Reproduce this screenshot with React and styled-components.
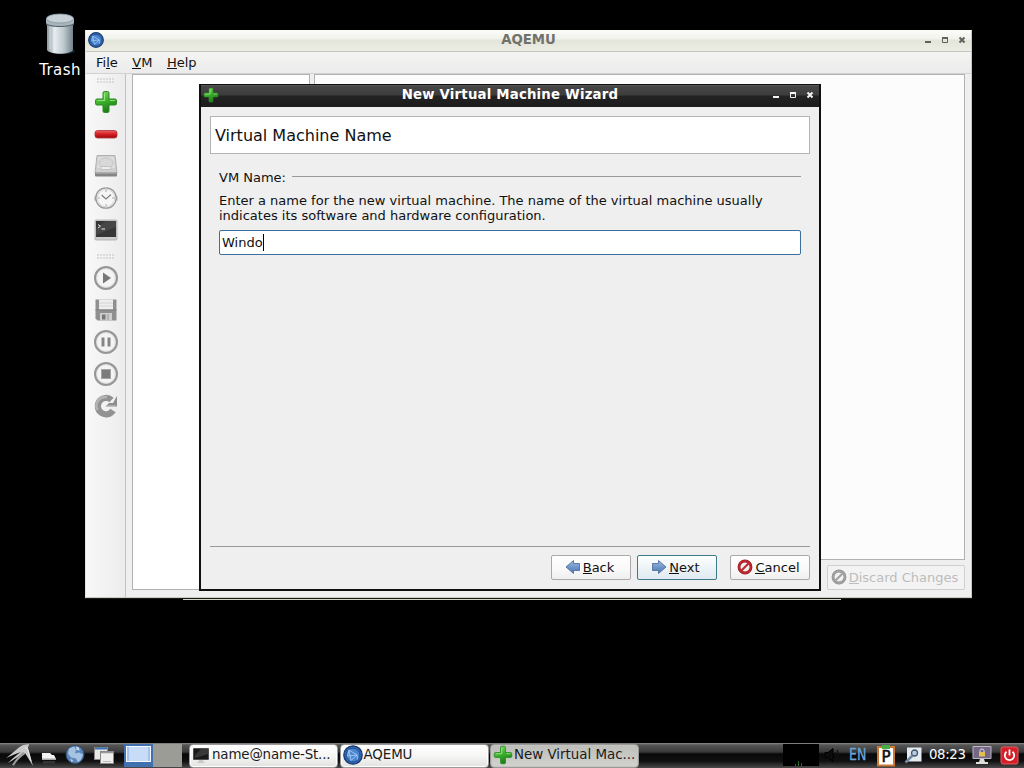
import styled, { createGlobalStyle, css } from 'styled-components'

const GlobalStyle = createGlobalStyle`
  *, *::before, *::after { box-sizing: border-box; }
  body {
    margin: 0;
    background: #000;
    overflow: hidden;
    font-family: 'DejaVu Sans', sans-serif;
    font-size: 13px;
    color: #111;
  }
  svg { display: block; flex: none; }
  u {
    text-decoration: none;
    background: linear-gradient(currentColor, currentColor) 0 calc(100% - 1px) / 100% 1px no-repeat;
  }
`

const Desktop = styled.div`
  position: relative;
  width: 1024px;
  height: 768px;
  background: #000;
  overflow: hidden;
`

const DesktopIcon = styled.div`
  position: absolute;
  left: 30px;
  top: 13px;
  width: 60px;
  display: flex;
  flex-direction: column;
  align-items: center;
  color: #fff;
  font-size: 15px;
  letter-spacing: 0.4px;
  line-height: 20px;
  gap: 3px;
`

const HiddenWindowEdge = styled.div`
  position: absolute;
  left: 183px;
  top: 597px;
  width: 658px;
  height: 3px;
  background: #d4d5c9;
`

const MainWindow = styled.section`
  position: absolute;
  left: 85px;
  top: 30px;
  width: 887px;
  height: 568px;
  display: flex;
  flex-direction: column;
  background: #efefef;
  border: 1px solid #c9cabf;
  border-top-color: #fafaf5;
  border-left-color: #e4e4df;
  box-shadow: 0 1px 0 #1a1a18;
`

const TitleBar = styled.header`
  height: ${p => (p.$active ? 22 : 21)}px;
  flex: none;
  display: grid;
  grid-template-columns: 60px 1fr 60px;
  align-items: center;
  padding-bottom: 2px;
  font-weight: bold;
  font-size: 13.3px;
  ${p => p.$active
    ? css`
        color: #fff;
        letter-spacing: 0.19px;
        background: linear-gradient(#606060 0, #474747 1px, #3d3d3d 10px, #232323 11px, #1c1c1c 100%);
      `
    : css`
        color: #72726c;
        background: linear-gradient(#fbfbf8 0, #f2f2ec 8px, #e4e5d9 9px, #ecede4 100%);
        border-bottom: 1px solid #c6c6bf;
      `}
`

const TitleText = styled.h1`
  margin: 0;
  font-size: inherit;
  line-height: 18px;
  text-align: center;
`

const TitleIcon = styled.span`
  padding-left: 2px;
`

const WindowControls = styled.span`
  display: flex;
  justify-content: flex-end;
  padding-right: 4px;
`

const MenuBar = styled.nav`
  height: 22px;
  flex: none;
  display: flex;
  align-items: center;
  gap: 14.500px;
  padding-left: 10px;
  font-size: 13px;
  background: linear-gradient(#f4f4f3, #ebebeb);
  border-bottom: 1px solid #d2d2d2;
`

const WindowBody = styled.div`
  flex: 1;
  display: flex;
  min-height: 0;
`

const ToolBar = styled.div`
  width: 40px;
  flex: none;
  display: flex;
  flex-direction: column;
  align-items: center;
  background: linear-gradient(90deg, #f8f8f8, #f1f1f1 60%, #ececec);
  border-right: 1px solid #c2c2c2;
`

const ToolButton = styled.span`
  width: 32px;
  height: 32px;
  display: flex;
  align-items: center;
  justify-content: center;
`

const Grip = styled.span`
  width: 17px;
  height: 5px;
  margin: ${p => p.$margin};
  background: radial-gradient(circle at 1px 1px, #d2d2d2 0.6px, transparent 1px) 0 0 / 3px 3px;
`

const Panels = styled.div`
  flex: 1;
  display: flex;
  gap: 4px;
  padding: 0 6px 7px;
`

const VmList = styled.div`
  width: 178px;
  background: #fff;
  border: 1px solid #b1b1b1;
`

const VmDetails = styled.div`
  flex: 1;
  display: flex;
  flex-direction: column;
  align-items: flex-end;
  gap: 5px;
`

const DetailsPane = styled.div`
  flex: 1;
  width: 100%;
  background: #fcfcfc;
  border: 1px solid #b1b1b1;
`

const PushButton = styled.button`
  display: flex;
  align-items: center;
  justify-content: center;
  flex: none;
  width: ${p => p.$width || 80}px;
  height: 25px;
  margin: 0 0 0 ${p => p.$gap || 0}px;
  padding: 0 3px 1px 0;
  gap: 2px;
  font: inherit;
  font-size: 13px;
  color: #111;
  border: 1px solid #aaa;
  border-radius: 2px;
  background: linear-gradient(#fff, #f9f9f9 55%, #efefef);
  ${p => p.$default && css`
    border-color: #3c7a89;
    background: linear-gradient(#fdffff, #edf4f9 50%, #e0eaf0);
  `}
  &:disabled {
    color: #bdbdbd;
    border-color: #cfcfcf;
    background: #f3f3f3;
  }
`

const Dialog = styled.section`
  position: absolute;
  left: 199px;
  top: 84px;
  width: 622px;
  height: 507px;
  display: flex;
  flex-direction: column;
  background: #efefef;
  border: 2px solid #101010;
  border-top-width: 1px;
`

const DialogBody = styled.div`
  flex: 1;
  display: flex;
  flex-direction: column;
  padding: 9px;
`

const PageTitle = styled.h2`
  margin: 0;
  height: 38px;
  flex: none;
  padding-left: 4px;
  font-size: 16px;
  font-weight: normal;
  line-height: 38px;
  background: #fff;
  border: 1px solid #b4b4b4;
`

const Group = styled.div`
  flex: 1;
  padding: 16px 9px 0;
`

const GroupTitle = styled.div`
  display: flex;
  align-items: center;
  gap: 6px;
  line-height: 16px;

  &::after {
    content: '';
    flex: 1;
    height: 1px;
    margin-bottom: 3px;
    background: #999;
  }
`

const Hint = styled.p`
  margin: 7px 0;
  line-height: 15px;
  white-space: nowrap;
`

const NameField = styled.div`
  height: 25px;
  display: flex;
  align-items: center;
  padding-left: 2px;
  background: #fff;
  border: 1px solid #3c6f9c;
  border-radius: 2px;
`

const Caret = styled.span`
  width: 1px;
  height: 17px;
  background: #000;
`

const DialogFooter = styled.footer`
  display: flex;
  justify-content: flex-end;
  border-top: 1px solid #999;
  padding-top: 8px;
`

const Panel = styled.footer`
  position: absolute;
  left: 0;
  right: 0;
  bottom: 0;
  height: 25px;
  display: flex;
  align-items: center;
  background: linear-gradient(#8a8a8a 0, #555 2px, #393939 9px, #080808 11px, #101010 18px, #4a4a4a 100%);
`

const Launchers = styled.div`
  display: flex;
  align-items: center;
  width: 124px;
  padding: 0 0 2px 5px;
  gap: 8px;
`

const Pager = styled.div`
  display: flex;
  width: 65px;
  height: 23px;
`

const PagerDesk = styled.span`
  width: 29px;
  height: 23px;
  padding: 2px 2px 3px;
  background: ${p => (p.$current ? '#4170b0' : '#9c9c96')};
`

const PagerWindow = styled.span`
  display: block;
  height: 16px;
  background: #c9dcf7;
  border: 1px solid #f5f9ff;
  box-shadow: inset 3px 0 0 -1px #a5c3ea, inset -3px 0 0 -1px #a5c3ea;
`

const TaskList = styled.div`
  display: flex;
  gap: 1.500px;
  flex: 1;
`

const TaskButton = styled.span`
  width: 149px;
  height: 24px;
  display: flex;
  align-items: center;
  gap: ${p => p.$gap || 1}px;
  padding: 0 2px 2px;
  font-size: 13.4px;
  letter-spacing: ${p => p.$spacing || 0}px;
  white-space: nowrap;
  color: #1a1a1a;
  border: 1px solid #999;
  border-radius: 4px;
  box-shadow: inset 0 0 0 1px ${p => (p.$active ? '#c4c4c0' : '#fff')};
  background: ${p => (p.$active ? 'linear-gradient(#bdbdb9, #d2d2ce)' : 'linear-gradient(#fff, #f6f6f5 50%, #e2e2e0)')};
`

const Tray = styled.div`
  display: flex;
  align-items: center;
  width: 241px;
  padding-bottom: 1px;
  color: #fff;
`

const CpuGraph = styled.span`
  width: 36px;
  height: 22px;
  display: flex;
  align-items: flex-end;
  padding-left: 11px;
  background: #000;
`

const KeyboardLayout = styled.span`
  width: 19px;
  margin: 0 8px 0 10px;
  color: #6aa5da;
  font-size: 15px;
  line-height: 20px;
  transform: scaleX(0.84);
  transform-origin: left;
  -webkit-text-stroke: 0.3px #6aa5da;
`

const Clock = styled.time`
  width: 37px;
  margin: 0 6px 0 7px;
  font-size: 13.3px;
  letter-spacing: -0.35px;
  line-height: 20px;
  white-space: nowrap;
`

const TraySpacer = styled.span`
  width: 8px;
`

const TrashIcon = () => (
  <svg width="32" height="44" viewBox="0 0 32 44">
    <defs>
      <linearGradient id="can">
        <stop offset="0" stopColor="#8e999f" />
        <stop offset=".3" stopColor="#e5ebee" />
        <stop offset=".65" stopColor="#bcc8ce" />
        <stop offset="1" stopColor="#758188" />
      </linearGradient>
    </defs>
    <ellipse cx="20" cy="38" rx="11" ry="3" fill="#17242e" />
    <path d="M3 8v29c3 5 23 5 26 0V8z" fill="url(#can)" />
    <path d="M2 6v5c3 4 25 4 28 0V6z" fill="#a7b4bb" />
    <path d="M2 10.500c3 4 25 4 28 0" fill="none" stroke="#4c5d68" />
    <ellipse cx="16" cy="5.500" rx="13.500" ry="4.500" fill="#c6d0d6" stroke="#8998a1" strokeWidth=".8" />
    <path d="M6 14v22M10 15v24" stroke="#f1f5f7" strokeWidth="1" opacity=".5" />
  </svg>
)

const PlusIcon = ({ size = 24 }) => (
  <svg width={size} height={size} viewBox="0 0 24 24">
    <defs>
      <linearGradient id="green" x2="0.4" y2="1">
        <stop offset="0" stopColor="#8ae06c" />
        <stop offset=".5" stopColor="#40b42e" />
        <stop offset="1" stopColor="#1c7f17" />
      </linearGradient>
    </defs>
    <path d="M9 3q0-1.500 1.500-1.500h3q1.500 0 1.500 1.500v6h6q1.500 0 1.500 1.500v3q0 1.500-1.500 1.500h-6v6q0 1.500-1.500 1.500h-3q-1.500 0-1.500-1.500v-6H3q-1.500 0-1.500-1.500v-3Q1.500 9 3 9h6z" fill="url(#green)" stroke="#2a8a24" strokeWidth="1" />
    <path d="M10.500 3.500v7H3.500M16 10.500h5" fill="none" stroke="#b2f29a" strokeWidth="1.200" opacity=".7" />
  </svg>
)

const MinusIcon = () => (
  <svg width="24" height="24" viewBox="0 0 24 24">
    <defs>
      <linearGradient id="red" x2="0" y2="1">
        <stop offset="0" stopColor="#ee6464" />
        <stop offset=".5" stopColor="#d31e23" />
        <stop offset="1" stopColor="#9f0d12" />
      </linearGradient>
    </defs>
    <rect x="1" y="8.500" width="22" height="7.500" rx="2.500" fill="url(#red)" stroke="#b03032" strokeWidth=".8" />
  </svg>
)

const DriveIcon = () => (
  <svg width="24" height="24" viewBox="0 0 24 24">
    <path d="M3 1.500h18l2 17.500H1z" fill="#d0d0d0" stroke="#a4a4a4" strokeWidth=".8" />
    <path d="M4 3h16l1 11H3z" fill="#dedede" />
    <ellipse cx="12" cy="9" rx="7" ry="5" fill="#d8d8d8" stroke="#c4c4c4" />
    <path d="M7 12.500h10v3H7z" fill="#ececec" stroke="#bbb" strokeWidth=".8" />
    <rect x="1" y="18.500" width="22" height="4" rx="1" fill="#858585" />
    <path d="M2 19h20" stroke="#b8b8b8" />
  </svg>
)

const ClockIcon = () => (
  <svg width="24" height="24" viewBox="0 0 24 24">
    <path d="M.5 10.500h3v4h-3zM20.500 10.500h3v4h-3z" fill="#aaa" />
    <circle cx="12" cy="12" r="10.200" fill="#f6f6f6" stroke="#999" strokeWidth="1.300" />
    <circle cx="12" cy="12" r="8.700" fill="none" stroke="#d4d4d4" />
    <path d="M12 4v2M12 18v2M4 12h2M18 12h2" stroke="#aaa" />
    <path d="M7.500 9l4.500 4 5-4.500" fill="none" stroke="#7d7d7d" strokeWidth="1.100" />
  </svg>
)

const TerminalIcon = () => (
  <svg width="24" height="24" viewBox="0 0 24 24">
    <rect x="1" y="2" width="22" height="20" rx="1" fill="#ccc" stroke="#a9a9a9" strokeWidth=".8" />
    <rect x="2" y="3" width="20" height="16" fill="#363636" />
    <path d="M12 3h10v6L2 17V10z" fill="#555" opacity=".5" />
    <path d="M4 6.500l2.500 1.700L4 10M7.500 11h3.500" fill="none" stroke="#e8e8e8" />
  </svg>
)

const RoundIcon = ({ children }) => (
  <svg width="26" height="26" viewBox="0 0 26 26">
    <circle cx="13" cy="13" r="10.900" fill="#f4f4f4" stroke="#969696" strokeWidth="2.200" />
    <circle cx="13" cy="13" r="9.300" fill="none" stroke="#d5d5d5" strokeWidth=".8" />
    {children}
  </svg>
)

const FloppyIcon = () => (
  <svg width="24" height="24" viewBox="0 0 24 24">
    <path d="M1.500 1.500h21v21H3.500l-2-2z" fill="#909090" />
    <path d="M5 1.500h14v10H5z" fill="#eee" />
    <path d="M5 5h14M5 8h14" stroke="#d4d4d4" />
    <path d="M1.500 12h21" stroke="#7f7f7f" />
    <rect x="6" y="15" width="12" height="7.500" fill="#cecece" />
    <rect x="8" y="16.500" width="3.500" height="5" fill="#777" />
    <path d="M14 16v6" stroke="#aaa" strokeWidth="1.500" />
  </svg>
)

const ReloadIcon = () => (
  <svg width="26" height="26" viewBox="0 0 26 26">
    <path d="M20 17.500A8.200 8.200 0 1 1 18.500 7" fill="none" stroke="#929292" strokeWidth="6.200" />
    <path d="M4.500 17A8.800 8.800 0 0 1 14 4.200" fill="none" stroke="#b4b4b4" strokeWidth="2.500" />
    <path d="M24 3v10.500H12.500l3.500-3.500h4z" fill="#8d8d8d" />
    <path d="M14 12.500h9" stroke="#aaa" />
  </svg>
)

const AqemuIcon = ({ size = 16 }) => (
  <svg width={size} height={size} viewBox="0 0 20 20">
    <circle cx="10" cy="10" r="9.200" fill="#3266b0" stroke="#173a70" strokeWidth="1.300" />
    <circle cx="10" cy="10" r="6.800" fill="#4b86cf" stroke="#1f4c8f" strokeWidth=".8" />
    <path d="M6 5l8 5-6 5.500L6 5l-1.500 6 9.500-1 .5 4.500" fill="none" stroke="#b0d3f8" strokeWidth=".8" />
  </svg>
)

const Controls = ({ color }) => (
  <svg width="44" height="12" viewBox="0 0 44 12" fill="none" stroke={color}>
    <path d="M2 8h6" strokeWidth="2" />
    <path d="M19.500 3v5.500h5V3" />
    <path d="M19 4h6" strokeWidth="2" />
    <path d="M36.500 3.500l5 5M41.500 3.500l-5 5" strokeWidth="2" />
  </svg>
)

const ArrowIcon = ({ flip }) => (
  <svg width="16" height="16" viewBox="0 0 16 16">
    <defs>
      <linearGradient id="arrow" x2="0" y2="1">
        <stop offset="0" stopColor="#9dbbe0" />
        <stop offset="1" stopColor="#4674b5" />
      </linearGradient>
    </defs>
    <path
      transform={flip ? 'translate(16 0) scale(-1 1)' : undefined}
      d="M1.500 4.500h6v-3l7.500 6.500-7.500 6.500v-3h-6z"
      fill="url(#arrow)"
      stroke="#54719b"
      strokeWidth=".9"
    />
  </svg>
)

const ForbidIcon = ({ color = '#c1272d', dark = '#8d1b20' }) => (
  <svg width="16" height="16" viewBox="0 0 16 16">
    <circle cx="8" cy="8" r="6" fill="#f4f1f1" stroke={dark} strokeWidth="2.800" />
    <circle cx="8" cy="8" r="6" fill="none" stroke={color} strokeWidth="1.800" />
    <path d="M4 12l8-8" stroke={color} strokeWidth="2.200" />
  </svg>
)

const LxdeIcon = () => (
  <svg width="29" height="24" viewBox="0 0 29 24">
    <path d="M1 15C7 11 12 5 18 2l6-1 -1 4 5 18-8-13C14 12 9 17 3 20c4-4 8-8 13-11C10 11 6 13 1 15z" fill="#c9c9c9" />
    <path d="M18 9c-5 4-8 8-11 13l2 .5c3-5 7-9 12-12z" fill="#9c9c9c" />
    <path d="M20 4l3 3 3 11" fill="none" stroke="#eee" />
  </svg>
)

const FilesIcon = () => (
  <svg width="15" height="22" viewBox="0 0 15 22">
    <path d="M0 9h8l2 2h2l2 4H0z" fill="#f3f3f3" />
    <path d="M0 14.500h14v1.500H0z" fill="#a6a6a6" />
    <path d="M1 17h12v3H1z" fill="#333" />
  </svg>
)

const GlobeIcon = () => (
  <svg width="20" height="20" viewBox="0 0 20 20">
    <circle cx="10" cy="9.500" r="9" fill="#5b86b8" stroke="#334e70" />
    <path d="M4 3.500l5-2 2 3-1 4 4-1 4 2-2 5-3 3-2-4-5-1-3-4z" fill="#a6c4e2" />
    <path d="M11 1.500l3 1 .5 3-3-.5zM5 14l3 1-1 2.500z" fill="#c4d9ed" />
  </svg>
)

const WindowsIcon = () => (
  <svg width="22" height="20" viewBox="0 0 22 20">
    <rect x="1.500" y="2.500" width="13" height="12" fill="#e7e7e3" stroke="#888" />
    <path d="M2 3.500h12" stroke="#3e72b4" strokeWidth="2" />
    <rect x="7.500" y="6.500" width="13" height="12" fill="#efefed" stroke="#888" />
    <path d="M8 7.500h12" stroke="#9a9a98" strokeWidth="1.500" />
    <path d="M10 16.500h8" stroke="#bbb" />
  </svg>
)

const MonitorIcon = () => (
  <svg width="18" height="18" viewBox="0 0 18 18">
    <rect x="1" y="2" width="16" height="12" rx="1" fill="#4f4f4f" />
    <rect x="2" y="3" width="14" height="10" fill="#1a1a1a" />
    <path d="M9 3h7v5L3 12V9z" fill="#555" opacity=".5" />
    <path d="M7 14h4v1.500h1.500V17h-7v-1.500H7z" fill="#c9c9c9" />
  </svg>
)

const SpeakerIcon = () => (
  <svg width="20" height="18" viewBox="0 0 20 18">
    <path d="M6 6.500h3l5-4v13l-5-4H6z" fill="#0c0c0c" stroke="#000" />
    <path d="M16 6q2 3 0 6M18 4q2.500 5 0 10" fill="none" stroke="#111" strokeWidth="1.300" />
  </svg>
)

const ClipboardIcon = () => (
  <svg width="20" height="23" viewBox="0 0 20 23">
    <rect x="2" y="3" width="16" height="18.500" fill="#fff" stroke="#cc7834" strokeWidth="2" />
    <path d="M6 1h8v4H6z" fill="#45ae45" />
    <text x="5.500" y="18" fontFamily="DejaVu Sans" fontSize="15" fill="#111" stroke="#111" strokeWidth=".6">P</text>
  </svg>
)

const MagnifierIcon = () => (
  <svg width="18" height="18" viewBox="0 0 18 18">
    <rect x="3" y="1.500" width="14.500" height="14" fill="#e4eaef" />
    <circle cx="10.500" cy="7" r="3" fill="#b6cde1" stroke="#44566b" strokeWidth="1.300" />
    <path d="M8.500 9.500L1.500 16.500" stroke="#7089a5" strokeWidth="2.500" />
  </svg>
)

const LockIcon = () => (
  <svg width="20" height="20" viewBox="0 0 20 20">
    <rect x=".5" y="1" width="19" height="13" rx="1" fill="#bdb7c8" />
    <rect x="1.500" y="2" width="17" height="11" fill="#746886" />
    <path d="M8 7V5.500q0-1.500 2-1.500t2 1.500V7" fill="none" stroke="#ddd" />
    <rect x="7" y="7" width="6" height="4.500" fill="#e1bd54" />
    <path d="M8 14h4l1 3h3v2H4v-2h3z" fill="#deded8" />
  </svg>
)

const PowerIcon = () => (
  <svg width="19" height="19" viewBox="0 0 19 19">
    <rect x="1" y="1" width="17" height="17" rx="2" fill="#d51f29" stroke="#e95b61" />
    <path d="M6.500 5.800a4.700 4.700 0 1 0 6 0M9.500 3.500v6" fill="none" stroke="#fff" strokeWidth="1.800" />
  </svg>
)

const TOOLS = [PlusIcon, MinusIcon, DriveIcon, ClockIcon, TerminalIcon]

export default function App() {
  return (
    <Desktop>
      <GlobalStyle />
      <DesktopIcon>
        <TrashIcon />
        Trash
      </DesktopIcon>

      <HiddenWindowEdge />

      <MainWindow>
        <TitleBar>
          <TitleIcon><AqemuIcon /></TitleIcon>
          <TitleText>AQEMU</TitleText>
          <WindowControls><Controls color="#62625d" /></WindowControls>
        </TitleBar>
        <MenuBar>
          <span>Fi<u>l</u>e</span>
          <span><u>V</u>M</span>
          <span><u>H</u>elp</span>
        </MenuBar>
        <WindowBody>
          <ToolBar>
            <Grip $margin="4px 0 3px" />
            {TOOLS.map((Icon, i) => (
              <ToolButton key={i}><Icon /></ToolButton>
            ))}
            <Grip $margin="8px 0 3px" />
            <ToolButton>
              <RoundIcon><path d="M10 7.500l8 5.500-8 5.500z" fill="#777" /></RoundIcon>
            </ToolButton>
            <ToolButton><FloppyIcon /></ToolButton>
            <ToolButton>
              <RoundIcon><path d="M10 8.500v9M16 8.500v9" stroke="#858585" strokeWidth="3" /></RoundIcon>
            </ToolButton>
            <ToolButton>
              <RoundIcon><rect x="8.500" y="8.500" width="9" height="9" fill="#7c7c7c" stroke="#a4a4a4" /></RoundIcon>
            </ToolButton>
            <ToolButton><ReloadIcon /></ToolButton>
          </ToolBar>
          <Panels>
            <VmList />
            <VmDetails>
              <DetailsPane />
              <PushButton $width={138} disabled>
                <ForbidIcon color="#a2a2a2" dark="#8d8d8d" />
                <span><u>D</u>iscard Changes</span>
              </PushButton>
            </VmDetails>
          </Panels>
        </WindowBody>
      </MainWindow>

      <Dialog>
        <TitleBar $active>
          <TitleIcon><PlusIcon size={16} /></TitleIcon>
          <TitleText>New Virtual Machine Wizard</TitleText>
          <WindowControls><Controls color="#f2f2f2" /></WindowControls>
        </TitleBar>
        <DialogBody>
          <PageTitle>Virtual Machine Name</PageTitle>
          <Group>
            <GroupTitle>VM Name:</GroupTitle>
            <Hint>
              Enter a name for the new virtual machine. The name of the virtual machine usually
              <br />
              indicates its software and hardware configuration.
            </Hint>
            <NameField>Windo<Caret /></NameField>
          </Group>
          <DialogFooter>
            <PushButton><ArrowIcon flip /><span><u>B</u>ack</span></PushButton>
            <PushButton $gap={6} $default><ArrowIcon /><span><u>N</u>ext</span></PushButton>
            <PushButton $gap={13}><ForbidIcon /><span><u>C</u>ancel</span></PushButton>
          </DialogFooter>
        </DialogBody>
      </Dialog>

      <Panel>
        <Launchers>
          <LxdeIcon />
          <FilesIcon />
          <GlobeIcon />
          <WindowsIcon />
        </Launchers>
        <Pager>
          <PagerDesk $current><PagerWindow /></PagerDesk>
          <PagerDesk />
        </Pager>
        <TaskList>
          <TaskButton $gap={2} $spacing={-0.15}><MonitorIcon />name@name-St...</TaskButton>
          <TaskButton $spacing={-0.1}><AqemuIcon size={20} />AQEMU</TaskButton>
          <TaskButton $active><PlusIcon size={20} />New Virtual Mac...</TaskButton>
        </TaskList>
        <Tray>
          <CpuGraph>
            <svg width="10" height="5" viewBox="0 0 10 5"><path d="M1.500 5V3M4.500 5V0M7.500 5V2" stroke="#2a6b2a" /></svg>
          </CpuGraph>
          <SpeakerIcon />
          <KeyboardLayout>EN</KeyboardLayout>
          <ClipboardIcon />
          <TraySpacer />
          <MagnifierIcon />
          <Clock>08:23</Clock>
          <LockIcon />
          <TraySpacer />
          <PowerIcon />
        </Tray>
      </Panel>
    </Desktop>
  )
}
